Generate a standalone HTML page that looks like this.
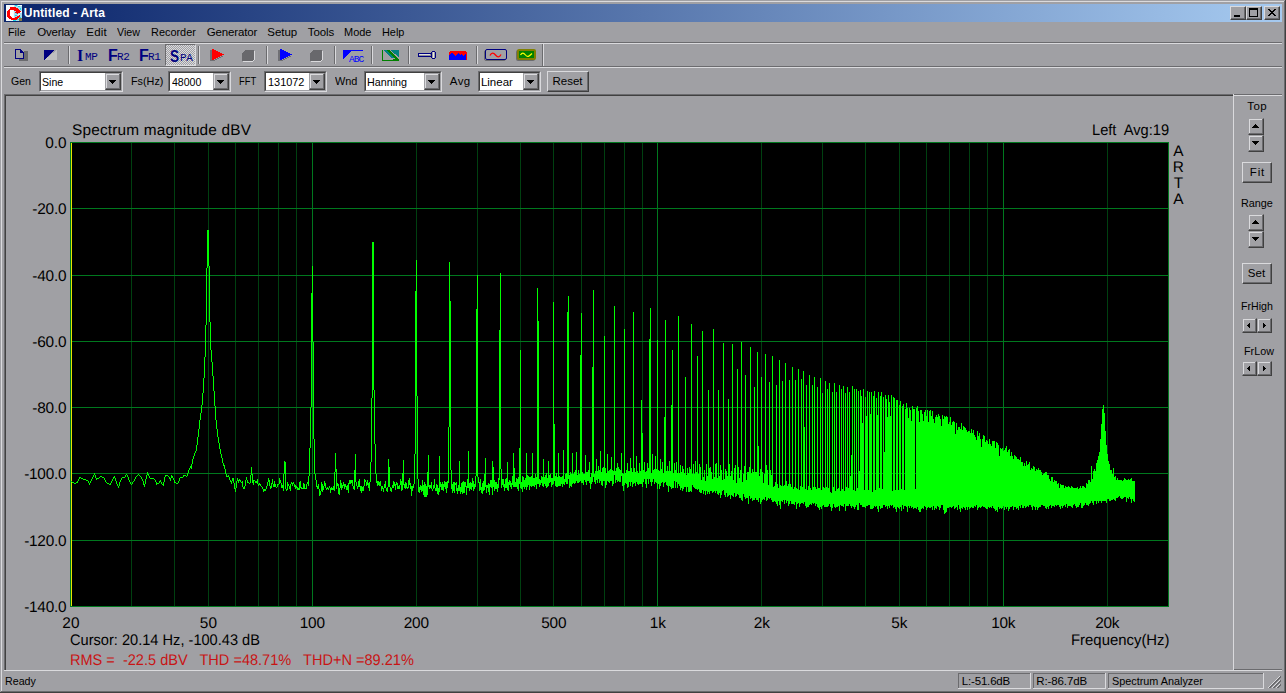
<!DOCTYPE html>
<html lang="en"><head><meta charset="utf-8"><title>Untitled - Arta</title>
<style>
html,body{margin:0;padding:0}
body{width:1286px;height:693px;overflow:hidden;background:#a0a0a4;position:relative;font-family:"Liberation Sans",sans-serif}
body>div,body>svg,body>span{position:absolute;display:block}
.title{background:linear-gradient(90deg,#0a246a 0%,#a6caf0 100%)}
.btn{box-sizing:border-box;background:#a0a0a4;border-top:1px solid #dadadd;border-left:1px solid #dadadd;border-right:1px solid #404040;border-bottom:1px solid #404040;box-shadow:inset -1px -1px 0 #6b6b6e}
.btn.sb{border-top-color:#a0a0a4;border-left-color:#a0a0a4;box-shadow:inset -1px -1px 0 #6b6b6e,inset 1px 1px 0 #dadadd}
.sunk{box-sizing:border-box;border-top:1px solid #6b6b6e;border-left:1px solid #6b6b6e;border-right:1px solid #dadadd;border-bottom:1px solid #dadadd}
.sunk .white{box-sizing:border-box;width:100%;height:100%;background:#fff;border-top:1px solid #404040;border-left:1px solid #404040;border-right:1px solid #a0a0a4;border-bottom:1px solid #a0a0a4}
.t{white-space:pre;line-height:1;}
.ui{font-family:"Liberation Sans",sans-serif}
.ar{font-family:"Liberation Sans",sans-serif;text-rendering:geometricPrecision}

.tb-big{font-weight:bold;font-size:16px;line-height:16px;color:#000080}
.tb-small{font-family:"Liberation Mono",monospace;font-size:11px;line-height:11px;color:#000080;letter-spacing:-0.4px}
.tb-abc{font-family:"Liberation Mono",monospace;font-weight:normal;font-size:9.5px;line-height:9.5px;color:#0000ff;letter-spacing:-0.9px}
.tb-pressed{box-sizing:border-box;border-top:1px solid #6b6b6e;border-left:1px solid #6b6b6e;border-right:1px solid #dadadd;border-bottom:1px solid #dadadd;
background-color:#a0a0a4;background-image:conic-gradient(#dadadd 25%,#a0a0a4 0 50%,#dadadd 0 75%,#a0a0a4 0);background-size:2px 2px}
</style></head>
<body>
<div style="left:1px;top:1px;width:1284px;height:1px;background:#dadadd;"></div>
<div style="left:1px;top:1px;width:1px;height:691px;background:#dadadd;"></div>
<div style="left:0px;top:692px;width:1286px;height:1px;background:#404040;"></div>
<div style="left:1285px;top:0px;width:1px;height:693px;background:#404040;"></div>
<div style="left:1px;top:691px;width:1284px;height:1px;background:#6b6b6e;"></div>
<div style="left:1284px;top:1px;width:1px;height:691px;background:#6b6b6e;"></div>
<div class="title" style="left:4px;top:4px;width:1278px;height:18px"></div>
<svg style="left:6px;top:5px" width="16" height="16" viewBox="0 0 16 16" shape-rendering="crispEdges">
<rect width="16" height="16" fill="#f4fafd"/>
<rect x="8" y="0" width="8" height="16" fill="#a8e0f0"/>
<path d="M9 0h2v1h-2zM12 1h2v1h-2zM14 3h1v2h-1zM10 8h2v1h-2zM9 10h2v1h-2zM13 12h2v1h-2zM11 14h2v1h-2zM7 15h3v1h-3z" fill="#18d8e8"/>
<path d="M12 0h4v1h-4zM14 6h2v2h-2zM12 9h2v1h-2z" fill="#f4fafd"/>
<rect x="13" y="13" width="3" height="3" fill="#807848"/>
<path d="M4 2h6v1h2v1h1v1h1v1h1v1h-1v1h-2v1h-1v-1h-2v-1h1v-1h-2v-1h-2v1h-1v6h1v1h3v-1h2v-1h2v-1h1v2h-1v1h-1v1h-1v1h-6v-1h-2v-1h-1v-1h-1v-6h1v-1h1v-1h1z" fill="#ff0000"/>
<rect x="4" y="5" width="3" height="6" fill="#ffffff"/>
</svg>
<span class="t ui" style="left:23.82px;top:6.84px;font-size:12px;letter-spacing:0.16px;color:#fff;font-weight:bold;">Untitled - Arta</span>
<div class="btn " style="left:1230px;top:6px;width:16px;height:14px"></div>
<div class="btn " style="left:1246px;top:6px;width:16px;height:14px"></div>
<div class="btn " style="left:1264px;top:6px;width:16px;height:14px"></div>
<div style="left:1234px;top:15px;width:6px;height:2px;background:#000;"></div>
<div style="left:1249px;top:8px;width:9px;height:9px;box-sizing:border-box;border:1px solid #000;border-top:2px solid #000"></div>
<svg style="left:1268px;top:9px" width="8" height="7" viewBox="0 0 8 7" shape-rendering="crispEdges"><path d="M0 0h2v1h1v1h2v-1h1v-1h2v1h-1v1h-1v1h-1v1h1v1h1v1h1v1h-2v-1h-1v-1h-2v1h-1v1h-2v-1h1v-1h1v-1h1v-1h-1v-1h-1v-1h-1z" fill="#000"/></svg>
<span class="t ui" style="left:8.30px;top:27.27px;font-size:11.5px;transform:scaleX(0.939);transform-origin:0 0;">File</span>
<span class="t ui" style="left:37.25px;top:27.27px;font-size:11.5px;letter-spacing:-0.19px;">Overlay</span>
<span class="t ui" style="left:86.25px;top:27.27px;font-size:11.5px;letter-spacing:0.22px;">Edit</span>
<span class="t ui" style="left:116.81px;top:27.27px;font-size:11.5px;transform:scaleX(0.926);transform-origin:0 0;">View</span>
<span class="t ui" style="left:150.79px;top:27.27px;font-size:11.5px;transform:scaleX(0.949);transform-origin:0 0;">Recorder</span>
<span class="t ui" style="left:206.75px;top:27.27px;font-size:11.5px;letter-spacing:-0.16px;">Generator</span>
<span class="t ui" style="left:267.25px;top:27.27px;font-size:11.5px;letter-spacing:-0.02px;">Setup</span>
<span class="t ui" style="left:307.75px;top:27.27px;font-size:11.5px;letter-spacing:-0.09px;">Tools</span>
<span class="t ui" style="left:344.29px;top:27.27px;font-size:11.5px;transform:scaleX(0.953);transform-origin:0 0;">Mode</span>
<span class="t ui" style="left:382.29px;top:27.27px;font-size:11.5px;transform:scaleX(0.948);transform-origin:0 0;">Help</span>
<div style="left:4px;top:42px;width:1278px;height:1px;background:#6b6b6e;"></div>
<div style="left:4px;top:43px;width:1278px;height:1px;background:#dadadd;"></div>
<div style="left:4px;top:66px;width:1278px;height:1px;background:#6b6b6e;"></div>
<div style="left:4px;top:67px;width:1278px;height:1px;background:#dadadd;"></div>
<svg style="left:15px;top:49px" width="13" height="12" viewBox="0 0 13 12" shape-rendering="crispEdges"><path d="M4 2h9v10h-9z" fill="#6b6b6e"/><path d="M0 0h6l3 3v7h-9z" fill="#a0a0a4"/><path d="M0 0h6v1h1v1h1v1h1v7h-9zM1 1v8h7v-5h-3v-3z" fill="#000080" fill-rule="evenodd"/></svg>
<svg style="left:44px;top:50px" width="13" height="10" viewBox="0 0 13 10" shape-rendering="crispEdges"><path d="M13 0v10h-13z" fill="#c0c0c0"/><path d="M0 0h11l-11 10z" fill="#000080"/></svg>
<div style="left:68px;top:46px;width:1px;height:18px;background:#6b6b6e"></div>
<div style="left:69px;top:46px;width:1px;height:18px;background:#dadadd"></div>
<span class="tb-big" style="left:77px;top:48px;font-family:'Liberation Serif',sans-serif">I</span>
<span class="tb-small" style="left:85px;top:52px">MP</span>
<span class="tb-big" style="left:108px;top:48px;font-family:'Liberation Sans',sans-serif">F</span>
<span class="tb-small" style="left:117px;top:52px">R2</span>
<span class="tb-big" style="left:139px;top:48px;font-family:'Liberation Sans',sans-serif">F</span>
<span class="tb-small" style="left:148px;top:52px">R1</span>
<div class="tb-pressed" style="left:165px;top:44px;width:31px;height:22px"></div>
<span class="tb-big" style="left:170px;top:49px;font-family:'Liberation Sans',sans-serif;transform:scaleX(0.85);transform-origin:0 0">S</span>
<span class="tb-small" style="left:180px;top:53px">PA</span>
<div style="left:198px;top:46px;width:1px;height:18px;background:#6b6b6e"></div>
<div style="left:199px;top:46px;width:1px;height:18px;background:#dadadd"></div>
<svg style="left:210px;top:49px" width="15" height="12" viewBox="0 0 15 12" shape-rendering="crispEdges"><path d="M0 1h2v11h-2z" fill="#707074"/><path d="M2 11h3v1h-3zM5 10h2v1h-2zM7 9h2v1h-2zM9 8h2v1h-2zM11 7h2v1h-2z" fill="#707074"/><path d="M2 0h2v1h2v1h2v1h2v1h2v1h2v1h-2v1h-2v1h-2v1h-2v1h-2v1h-2z" fill="#ff0000"/></svg>
<svg style="left:242px;top:50px" width="13" height="12" viewBox="0 0 13 12" shape-rendering="crispEdges"><path d="M3 0h9v9l-2 2h-10v-8z" fill="#68686c"/><path d="M12 1h1v9h-1zM11 10h1v1h-1zM1 11h10v1h-10z" fill="#dadadd"/></svg>
<div style="left:266px;top:46px;width:1px;height:18px;background:#6b6b6e"></div>
<div style="left:267px;top:46px;width:1px;height:18px;background:#dadadd"></div>
<svg style="left:278px;top:49px" width="15" height="12" viewBox="0 0 15 12" shape-rendering="crispEdges"><path d="M0 1h2v11h-2z" fill="#707074"/><path d="M2 11h3v1h-3zM5 10h2v1h-2zM7 9h2v1h-2zM9 8h2v1h-2zM11 7h2v1h-2z" fill="#707074"/><path d="M2 0h2v1h2v1h2v1h2v1h2v1h2v1h-2v1h-2v1h-2v1h-2v1h-2v1h-2z" fill="#0000ff"/></svg>
<svg style="left:310px;top:50px" width="13" height="12" viewBox="0 0 13 12" shape-rendering="crispEdges"><path d="M3 0h9v9l-2 2h-10v-8z" fill="#68686c"/><path d="M12 1h1v9h-1zM11 10h1v1h-1zM1 11h10v1h-10z" fill="#dadadd"/></svg>
<div style="left:334px;top:46px;width:1px;height:18px;background:#6b6b6e"></div>
<div style="left:335px;top:46px;width:1px;height:18px;background:#dadadd"></div>
<svg style="left:343px;top:50px" width="21" height="11" viewBox="0 0 21 11" shape-rendering="crispEdges"><path d="M0 0h20v1h-20z" fill="#0000ff"/><path d="M0 1h8l-8 8z" fill="#0000ff"/></svg>
<span class="tb-abc" style="left:349px;top:55px">ABC</span>
<div style="left:371px;top:46px;width:1px;height:18px;background:#6b6b6e"></div>
<div style="left:372px;top:46px;width:1px;height:18px;background:#dadadd"></div>
<svg style="left:382px;top:50px" width="18" height="11" viewBox="0 0 18 11" shape-rendering="crispEdges"><path d="M8 0h9v7z" fill="#008080"/><path d="M1 0h3l8 8h-3z" fill="#008080"/><path d="M5 0h2l10 9v2h-2z" fill="#008000"/><path d="M0 0h1v11h-1zM0 9h17v2h-17z" fill="#008000"/><path d="M1 9h10v1h-10z" fill="#a0a0a4"/></svg>
<div style="left:408px;top:46px;width:1px;height:18px;background:#6b6b6e"></div>
<div style="left:409px;top:46px;width:1px;height:18px;background:#dadadd"></div>
<svg style="left:418px;top:51px" width="19" height="9" viewBox="0 0 19 9" shape-rendering="crispEdges"><path d="M0 2h14v4h-14z" fill="#000080"/><path d="M1 3h12v2h-12z" fill="#909094"/><path d="M1 3h11v1h-11z" fill="#e0e0e0"/><path d="M14 0h3v1h1v6h-1v1h-3v-1h-1v-6h1z" fill="#000080"/><path d="M14 1h3v6h-3z" fill="#a0a0a4"/><path d="M15 1h1v6h-1z" fill="#e8e8e0"/></svg>
<svg style="left:449px;top:51px" width="18" height="9" viewBox="0 0 18 9" shape-rendering="crispEdges"><path d="M1 0h16v1h1v8h-18v-8h1z" fill="#ff0000"/><path d="M0 4h1v-1h1v-1h2v1h1v1h1v1h1v-1h1v-1h1v-1h1v1h1v1h1v-1h1v1h1v1h1v-1h1v-1h1v6h-18z" fill="#0000ff"/></svg>
<div style="left:476px;top:46px;width:1px;height:18px;background:#6b6b6e"></div>
<div style="left:477px;top:46px;width:1px;height:18px;background:#dadadd"></div>
<svg style="left:484px;top:49px" width="23" height="12" viewBox="0 0 23 12" shape-rendering="crispEdges"><rect x="0.5" y="1.5" width="21" height="10" rx="1.5" fill="none" stroke="#6b6b6e" shape-rendering="auto"/><rect x="1.5" y="0.5" width="21" height="10" rx="1.5" fill="#a0a0a4" stroke="#000080" shape-rendering="auto"/><path d="M6 6.5c1.5-3 3.5-3 5.5-0.5s4 2.500 5.500-0.500" fill="none" stroke="#ff0000" stroke-width="1.300" shape-rendering="auto"/></svg>
<svg style="left:516px;top:49px" width="20" height="12" viewBox="0 0 20 12" shape-rendering="crispEdges"><rect x="0" y="1" width="19" height="11" rx="2" fill="#6b6b6e" shape-rendering="auto"/><rect x="1" y="0" width="19" height="11" rx="2" fill="#808000" shape-rendering="auto"/><rect x="3" y="2" width="15" height="7" fill="#008000"/><path d="M4.500 6c1.500-2.500 3-2.500 5 0s3.500 1.500 6.500-1.500" fill="none" stroke="#ffff00" stroke-width="1.200" shape-rendering="auto"/></svg>
<div style="left:542px;top:44px;width:1px;height:22px;background:#6b6b6e"></div>
<div style="left:543px;top:44px;width:1px;height:22px;background:#dadadd"></div>
<span class="t ui" style="left:10.82px;top:76.27px;font-size:11.5px;transform:scaleX(0.913);transform-origin:0 0;">Gen</span>
<div class="sunk" style="left:39px;top:71px;width:84px;height:21px"><div class="white"></div></div>
<div class="btn sb" style="left:105px;top:73px;width:16px;height:17px"></div>
<svg style="left:109px;top:80px" width="7" height="4" viewBox="0 0 7 4" shape-rendering="crispEdges"><path d="M0 0h7v1h-1v1h-1v1h-1v1h-1v-1h-1v-1h-1v-1h-1z" fill="#000"/></svg>
<span class="t ui" style="left:41.71px;top:77.27px;font-size:11.5px;transform:scaleX(0.919);transform-origin:0 0;">Sine</span>
<span class="t ui" style="left:130.80px;top:76.27px;font-size:11.5px;transform:scaleX(0.939);transform-origin:0 0;">Fs(Hz)</span>
<div class="sunk" style="left:168px;top:71px;width:63px;height:21px"><div class="white"></div></div>
<div class="btn sb" style="left:213px;top:73px;width:16px;height:17px"></div>
<svg style="left:217px;top:80px" width="7" height="4" viewBox="0 0 7 4" shape-rendering="crispEdges"><path d="M0 0h7v1h-1v1h-1v1h-1v1h-1v-1h-1v-1h-1v-1h-1z" fill="#000"/></svg>
<span class="t ui" style="left:172.11px;top:77.27px;font-size:11.5px;transform:scaleX(0.918);transform-origin:0 0;">48000</span>
<span class="t ui" style="left:239.39px;top:76.27px;font-size:11.5px;transform:scaleX(0.817);transform-origin:0 0;">FFT</span>
<div class="sunk" style="left:264px;top:71px;width:63px;height:21px"><div class="white"></div></div>
<div class="btn sb" style="left:309px;top:73px;width:16px;height:17px"></div>
<svg style="left:313px;top:80px" width="7" height="4" viewBox="0 0 7 4" shape-rendering="crispEdges"><path d="M0 0h7v1h-1v1h-1v1h-1v1h-1v-1h-1v-1h-1v-1h-1z" fill="#000"/></svg>
<span class="t ui" style="left:268.29px;top:77.27px;font-size:11.5px;transform:scaleX(0.949);transform-origin:0 0;">131072</span>
<span class="t ui" style="left:335.29px;top:76.27px;font-size:11.5px;transform:scaleX(0.948);transform-origin:0 0;">Wnd</span>
<div class="sunk" style="left:364px;top:71px;width:78px;height:21px"><div class="white"></div></div>
<div class="btn sb" style="left:424px;top:73px;width:16px;height:17px"></div>
<svg style="left:428px;top:80px" width="7" height="4" viewBox="0 0 7 4" shape-rendering="crispEdges"><path d="M0 0h7v1h-1v1h-1v1h-1v1h-1v-1h-1v-1h-1v-1h-1z" fill="#000"/></svg>
<span class="t ui" style="left:366.80px;top:77.27px;font-size:11.5px;transform:scaleX(0.936);transform-origin:0 0;">Hanning</span>
<span class="t ui" style="left:449.75px;top:76.27px;font-size:11.5px;letter-spacing:0.44px;">Avg</span>
<div class="sunk" style="left:478px;top:71px;width:63px;height:21px"><div class="white"></div></div>
<div class="btn sb" style="left:523px;top:73px;width:16px;height:17px"></div>
<svg style="left:527px;top:80px" width="7" height="4" viewBox="0 0 7 4" shape-rendering="crispEdges"><path d="M0 0h7v1h-1v1h-1v1h-1v1h-1v-1h-1v-1h-1v-1h-1z" fill="#000"/></svg>
<span class="t ui" style="left:480.95px;top:77.27px;font-size:11.5px;letter-spacing:-0.01px;">Linear</span>
<div class="btn " style="left:547px;top:71px;width:42px;height:21px"></div>
<span class="t ui" style="left:552.45px;top:76.27px;font-size:11.5px;letter-spacing:0.01px;">Reset</span>
<div style="left:4px;top:94px;width:1229px;height:1px;background:#6b6b6e;"></div>
<div style="left:4px;top:94px;width:1px;height:576px;background:#6b6b6e;"></div>
<div style="left:5px;top:95px;width:1228px;height:1px;background:#404040;"></div>
<div style="left:5px;top:95px;width:1px;height:575px;background:#404040;"></div>
<div style="left:1233px;top:94px;width:1px;height:577px;background:#dadadd;"></div>
<div style="left:4px;top:670px;width:1278px;height:1px;background:#dadadd;"></div>
<div style="left:1234px;top:94px;width:48px;height:1px;background:#6b6b6e;"></div>
<div style="left:1234px;top:95px;width:48px;height:1px;background:#dadadd;"></div>
<div style="left:1234px;top:669px;width:48px;height:1px;background:#6b6b6e;"></div>
<svg style="left:0;top:0" width="1286" height="693" viewBox="0 0 1286 693" shape-rendering="crispEdges">
<rect x="70" y="142" width="1099" height="465" fill="#000"/>
<path fill="#004010" d="M131 142h1v464h-1zM174 142h1v464h-1zM208 142h1v464h-1zM235 142h1v464h-1zM258 142h1v464h-1zM278 142h1v464h-1zM296 142h1v464h-1zM416 142h1v464h-1zM477 142h1v464h-1zM520 142h1v464h-1zM553 142h1v464h-1zM581 142h1v464h-1zM604 142h1v464h-1zM624 142h1v464h-1zM642 142h1v464h-1zM761 142h1v464h-1zM822 142h1v464h-1zM865 142h1v464h-1zM899 142h1v464h-1zM926 142h1v464h-1zM949 142h1v464h-1zM969 142h1v464h-1zM987 142h1v464h-1zM1107 142h1v464h-1z"/>
<path fill="#00781e" d="M312 142h1v464h-1zM657 142h1v464h-1zM1003 142h1v464h-1zM70 142h1v464h-1zM1168 142h1v464h-1zM70 142h1099v1h-1099zM70 208h1099v1h-1099zM70 275h1099v1h-1099zM70 341h1099v1h-1099zM70 407h1099v1h-1099zM70 473h1099v1h-1099zM70 540h1099v1h-1099zM70 606h1099v1h-1099z"/>
<rect x="71" y="143" width="1" height="463" fill="#e6e600"/>
<path fill="#00ff00" d="M71 481h1v1h-1zM72 482h1v1h-1zM73 482h1v1h-1zM74 483h1v1h-1zM75 483h1v1h-1zM76 482h1v1h-1zM77 481h1v2h-1zM78 479h1v2h-1zM79 477h1v2h-1zM80 477h1v1h-1zM81 478h1v1h-1zM82 478h1v1h-1zM83 479h1v1h-1zM84 479h1v1h-1zM85 479h1v1h-1zM86 480h1v1h-1zM87 480h1v1h-1zM88 481h1v2h-1zM89 483h1v2h-1zM90 481h1v2h-1zM91 479h1v2h-1zM92 477h1v2h-1zM93 475h1v2h-1zM94 473h1v2h-1zM95 475h1v3h-1zM96 478h1v2h-1zM97 478h1v1h-1zM98 478h1v1h-1zM99 477h1v1h-1zM100 476h1v1h-1zM101 476h1v1h-1zM102 477h1v1h-1zM103 477h1v1h-1zM104 478h1v2h-1zM105 480h1v2h-1zM106 482h1v1h-1zM107 483h1v1h-1zM108 483h1v1h-1zM109 484h1v1h-1zM110 483h1v2h-1zM111 481h1v2h-1zM112 479h1v2h-1zM113 477h1v2h-1zM114 476h1v2h-1zM115 478h1v3h-1zM116 481h1v3h-1zM117 484h1v2h-1zM118 486h1v2h-1zM119 482h1v4h-1zM120 480h1v2h-1zM121 478h1v2h-1zM122 477h1v1h-1zM123 477h1v1h-1zM124 477h1v1h-1zM125 475h1v2h-1zM126 474h1v1h-1zM127 475h1v2h-1zM128 477h1v3h-1zM129 480h1v2h-1zM130 482h1v2h-1zM131 484h1v1h-1zM132 482h1v2h-1zM133 481h1v1h-1zM134 479h1v2h-1zM135 477h1v2h-1zM136 476h1v1h-1zM137 475h1v1h-1zM138 474h1v1h-1zM139 475h1v1h-1zM140 476h1v1h-1zM141 477h1v2h-1zM142 479h1v2h-1zM143 481h1v4h-1zM144 484h1v3h-1zM145 479h1v5h-1zM146 475h1v4h-1zM147 472h1v3h-1zM148 474h1v2h-1zM149 476h1v2h-1zM150 478h1v1h-1zM151 478h1v1h-1zM152 478h1v1h-1zM153 478h1v1h-1zM154 479h1v1h-1zM155 480h1v2h-1zM156 482h1v3h-1zM157 483h1v1h-1zM158 483h1v1h-1zM159 481h1v2h-1zM160 480h1v2h-1zM161 482h1v2h-1zM162 484h1v1h-1zM163 482h1v4h-1zM164 477h1v5h-1zM165 475h1v2h-1zM166 475h1v1h-1zM167 475h1v1h-1zM168 476h1v1h-1zM169 477h1v2h-1zM170 478h1v3h-1zM171 475h1v3h-1zM172 476h1v2h-1zM173 478h1v2h-1zM174 480h1v3h-1zM175 482h1v1h-1zM176 483h1v1h-1zM177 483h1v1h-1zM178 481h1v2h-1zM179 478h1v3h-1zM180 477h1v1h-1zM181 477h1v1h-1zM182 477h1v1h-1zM183 475h1v2h-1zM184 475h1v1h-1zM185 475h1v1h-1zM186 476h1v1h-1zM187 473h1v3h-1zM188 470h1v3h-1zM189 468h1v2h-1zM190 466h1v2h-1zM191 464h1v5h-1zM192 459h1v5h-1zM193 456h1v3h-1zM194 453h1v3h-1zM195 451h1v2h-1zM196 445h1v6h-1zM197 437h1v8h-1zM198 429h1v8h-1zM199 420h1v9h-1zM200 413h1v7h-1zM201 405h1v8h-1zM202 393h1v12h-1zM203 378h1v15h-1zM204 357h1v21h-1zM205 325h1v32h-1zM206 268h1v57h-1zM207 230h1v38h-1zM208 230h1v36h-1zM209 266h1v56h-1zM210 322h1v28h-1zM211 350h1v12h-1zM212 362h1v14h-1zM213 376h1v15h-1zM214 391h1v15h-1zM215 406h1v14h-1zM216 420h1v9h-1zM217 429h1v8h-1zM218 437h1v6h-1zM219 443h1v6h-1zM220 449h1v5h-1zM221 454h1v4h-1zM222 458h1v5h-1zM223 463h1v3h-1zM224 465h1v4h-1zM225 469h1v5h-1zM226 474h1v3h-1zM227 476h1v1h-1zM228 475h1v2h-1zM229 477h1v3h-1zM230 480h1v2h-1zM231 481h1v3h-1zM232 478h1v3h-1zM233 478h1v5h-1zM234 483h1v6h-1zM235 488h1v4h-1zM236 481h1v7h-1zM237 478h1v3h-1zM238 480h1v3h-1zM239 479h1v2h-1zM240 480h1v2h-1zM241 482h1v1h-1zM242 481h1v6h-1zM243 487h1v2h-1zM244 486h1v3h-1zM245 480h1v6h-1zM246 477h1v3h-1zM247 480h1v3h-1zM248 482h1v1h-1zM249 483h1v1h-1zM250 475h1v8h-1zM251 467h1v8h-1zM252 474h1v9h-1zM253 480h1v5h-1zM254 480h1v1h-1zM255 481h1v2h-1zM256 481h1v2h-1zM257 479h1v5h-1zM258 484h1v2h-1zM259 483h1v2h-1zM260 484h1v2h-1zM261 486h1v1h-1zM262 487h1v2h-1zM263 489h1v3h-1zM264 489h1v2h-1zM265 489h1v2h-1zM266 486h1v3h-1zM267 482h1v4h-1zM268 478h1v4h-1zM269 480h1v6h-1zM270 486h1v3h-1zM271 483h1v5h-1zM272 479h1v5h-1zM273 484h1v3h-1zM274 481h1v6h-1zM275 484h1v3h-1zM276 487h1v1h-1zM277 484h1v3h-1zM278 484h1v1h-1zM279 478h1v6h-1zM280 480h1v3h-1zM281 483h1v5h-1zM282 485h1v3h-1zM283 474h1v17h-1zM284 461h1v13h-1zM285 462h1v27h-1zM286 489h1v2h-1zM287 482h1v8h-1zM288 484h1v2h-1zM289 486h1v3h-1zM290 484h1v7h-1zM291 482h1v2h-1zM292 483h1v3h-1zM293 482h1v2h-1zM294 484h1v3h-1zM295 485h1v4h-1zM296 486h1v2h-1zM297 487h1v3h-1zM298 488h1v2h-1zM299 482h1v8h-1zM300 481h1v7h-1zM301 487h1v2h-1zM302 488h1v1h-1zM303 483h1v6h-1zM304 484h1v5h-1zM305 488h1v1h-1zM306 484h1v5h-1zM307 482h1v2h-1zM308 476h1v10h-1zM309 448h1v28h-1zM310 407h1v41h-1zM311 293h1v114h-1zM312 266h1v76h-1zM313 342h1v97h-1zM314 439h1v35h-1zM315 474h1v6h-1zM316 480h1v7h-1zM317 486h1v3h-1zM318 484h1v5h-1zM319 489h1v7h-1zM320 491h1v4h-1zM321 482h1v9h-1zM322 484h1v8h-1zM323 486h1v4h-1zM324 481h1v5h-1zM325 483h1v5h-1zM326 488h1v2h-1zM327 487h1v2h-1zM328 488h1v2h-1zM329 486h1v2h-1zM330 488h1v5h-1zM331 487h1v3h-1zM332 488h1v2h-1zM333 486h1v4h-1zM334 472h1v19h-1zM335 453h1v19h-1zM336 469h1v20h-1zM337 483h1v3h-1zM338 484h1v10h-1zM339 488h1v7h-1zM340 480h1v8h-1zM341 483h1v7h-1zM342 485h1v3h-1zM343 482h1v4h-1zM344 484h1v5h-1zM345 484h1v3h-1zM346 486h1v4h-1zM347 485h1v5h-1zM348 483h1v10h-1zM349 480h1v4h-1zM350 480h1v4h-1zM351 480h1v3h-1zM352 480h1v6h-1zM353 486h1v3h-1zM354 470h1v20h-1zM355 454h1v28h-1zM356 482h1v4h-1zM357 486h1v3h-1zM358 481h1v6h-1zM359 479h1v8h-1zM360 486h1v5h-1zM361 486h1v7h-1zM362 487h1v4h-1zM363 486h1v5h-1zM364 479h1v7h-1zM365 480h1v2h-1zM366 482h1v4h-1zM367 480h1v5h-1zM368 483h1v5h-1zM369 482h1v9h-1zM370 462h1v20h-1zM371 398h1v64h-1zM372 242h1v156h-1zM373 242h1v148h-1zM374 390h1v54h-1zM375 444h1v30h-1zM376 474h1v9h-1zM377 481h1v5h-1zM378 481h1v4h-1zM379 482h1v4h-1zM380 481h1v5h-1zM381 486h1v5h-1zM382 486h1v3h-1zM383 488h1v4h-1zM384 484h1v4h-1zM385 481h1v7h-1zM386 488h1v3h-1zM387 487h1v5h-1zM388 459h1v28h-1zM389 467h1v20h-1zM390 487h1v4h-1zM391 488h1v4h-1zM392 485h1v3h-1zM393 481h1v7h-1zM394 482h1v4h-1zM395 484h1v6h-1zM396 482h1v3h-1zM397 483h1v6h-1zM398 486h1v3h-1zM399 485h1v4h-1zM400 479h1v6h-1zM401 481h1v10h-1zM402 473h1v17h-1zM403 460h1v25h-1zM404 484h1v4h-1zM405 482h1v7h-1zM406 483h1v5h-1zM407 487h1v2h-1zM408 480h1v8h-1zM409 478h1v7h-1zM410 483h1v6h-1zM411 486h1v10h-1zM412 486h1v5h-1zM413 484h1v4h-1zM414 454h1v30h-1zM415 291h1v163h-1zM416 260h1v136h-1zM417 396h1v83h-1zM418 479h1v13h-1zM419 487h1v6h-1zM420 485h1v5h-1zM421 486h1v6h-1zM422 480h1v11h-1zM423 485h1v10h-1zM424 482h1v15h-1zM425 484h1v13h-1zM426 486h1v11h-1zM427 472h1v23h-1zM428 455h1v32h-1zM429 485h1v4h-1zM430 485h1v3h-1zM431 482h1v7h-1zM432 489h1v2h-1zM433 485h1v4h-1zM434 479h1v9h-1zM435 488h1v3h-1zM436 484h1v7h-1zM437 485h1v9h-1zM438 488h1v7h-1zM439 456h1v36h-1zM440 482h1v5h-1zM441 484h1v6h-1zM442 482h1v8h-1zM443 484h1v7h-1zM444 481h1v6h-1zM445 482h1v7h-1zM446 482h1v11h-1zM447 481h1v7h-1zM448 427h1v56h-1zM449 262h1v165h-1zM450 301h1v169h-1zM451 470h1v19h-1zM452 484h1v9h-1zM453 482h1v9h-1zM454 482h1v11h-1zM455 483h1v2h-1zM456 482h1v9h-1zM457 488h1v6h-1zM458 485h1v6h-1zM459 461h1v30h-1zM460 487h1v7h-1zM461 483h1v9h-1zM462 482h1v12h-1zM463 481h1v12h-1zM464 482h1v11h-1zM465 482h1v5h-1zM466 486h1v9h-1zM467 479h1v9h-1zM468 451h1v37h-1zM469 483h1v8h-1zM470 482h1v7h-1zM471 483h1v7h-1zM472 478h1v9h-1zM473 481h1v10h-1zM474 484h1v5h-1zM475 476h1v11h-1zM476 309h1v167h-1zM477 275h1v202h-1zM478 477h1v6h-1zM479 482h1v9h-1zM480 479h1v11h-1zM481 487h1v6h-1zM482 483h1v11h-1zM483 481h1v10h-1zM484 474h1v16h-1zM485 458h1v29h-1zM486 485h1v8h-1zM487 485h1v3h-1zM488 483h1v9h-1zM489 484h1v11h-1zM490 480h1v7h-1zM491 480h1v8h-1zM492 461h1v34h-1zM493 467h1v20h-1zM494 480h1v11h-1zM495 482h1v7h-1zM496 482h1v7h-1zM497 484h1v8h-1zM498 478h1v10h-1zM499 330h1v150h-1zM500 273h1v196h-1zM501 469h1v19h-1zM502 479h1v6h-1zM503 479h1v8h-1zM504 484h1v7h-1zM505 479h1v9h-1zM506 478h1v10h-1zM507 462h1v28h-1zM508 482h1v9h-1zM509 480h1v5h-1zM510 481h1v6h-1zM511 483h1v6h-1zM512 476h1v9h-1zM513 453h1v34h-1zM514 468h1v19h-1zM515 482h1v5h-1zM516 478h1v9h-1zM517 479h1v10h-1zM518 477h1v14h-1zM519 448h1v36h-1zM520 350h1v138h-1zM521 482h1v7h-1zM522 476h1v16h-1zM523 477h1v10h-1zM524 480h1v9h-1zM525 478h1v9h-1zM526 453h1v37h-1zM527 475h1v12h-1zM528 476h1v9h-1zM529 477h1v13h-1zM530 477h1v9h-1zM531 476h1v11h-1zM532 453h1v33h-1zM533 478h1v8h-1zM534 478h1v9h-1zM535 474h1v11h-1zM536 477h1v12h-1zM537 288h1v196h-1zM538 321h1v163h-1zM539 479h1v8h-1zM540 480h1v5h-1zM541 476h1v7h-1zM542 477h1v9h-1zM543 459h1v28h-1zM544 477h1v7h-1zM545 475h1v11h-1zM546 473h1v15h-1zM547 478h1v9h-1zM548 461h1v25h-1zM549 475h1v8h-1zM550 474h1v8h-1zM551 478h1v9h-1zM552 478h1v7h-1zM553 302h1v182h-1zM554 424h1v57h-1zM555 476h1v10h-1zM556 473h1v14h-1zM557 477h1v10h-1zM558 453h1v33h-1zM559 476h1v10h-1zM560 477h1v9h-1zM561 477h1v7h-1zM562 476h1v11h-1zM563 450h1v34h-1zM564 479h1v6h-1zM565 474h1v8h-1zM566 473h1v11h-1zM567 312h1v172h-1zM568 296h1v183h-1zM569 475h1v13h-1zM570 472h1v14h-1zM571 474h1v13h-1zM572 453h1v31h-1zM573 474h1v9h-1zM574 472h1v12h-1zM575 470h1v13h-1zM576 452h1v29h-1zM577 475h1v8h-1zM578 470h1v13h-1zM579 474h1v8h-1zM580 355h1v126h-1zM581 313h1v170h-1zM582 472h1v11h-1zM583 474h1v11h-1zM584 474h1v6h-1zM585 455h1v27h-1zM586 472h1v13h-1zM587 472h1v9h-1zM588 470h1v11h-1zM589 462h1v21h-1zM590 477h1v12h-1zM591 473h1v11h-1zM592 367h1v115h-1zM593 290h1v187h-1zM594 474h1v8h-1zM595 471h1v13h-1zM596 459h1v21h-1zM597 471h1v12h-1zM598 466h1v13h-1zM599 470h1v13h-1zM600 451h1v30h-1zM601 472h1v13h-1zM602 468h1v18h-1zM603 467h1v14h-1zM604 336h1v145h-1zM605 468h1v20h-1zM606 473h1v12h-1zM607 454h1v27h-1zM608 471h1v11h-1zM609 470h1v13h-1zM610 469h1v12h-1zM611 457h1v24h-1zM612 470h1v16h-1zM613 471h1v13h-1zM614 306h1v169h-1zM615 471h1v12h-1zM616 468h1v12h-1zM617 463h1v19h-1zM618 467h1v14h-1zM619 469h1v13h-1zM620 470h1v12h-1zM621 453h1v23h-1zM622 473h1v13h-1zM623 474h1v17h-1zM624 329h1v156h-1zM625 473h1v10h-1zM626 470h1v14h-1zM627 463h1v25h-1zM628 471h1v16h-1zM629 471h1v11h-1zM630 458h1v28h-1zM631 468h1v14h-1zM632 472h1v15h-1zM633 312h1v172h-1zM634 468h1v15h-1zM635 472h1v14h-1zM636 456h1v26h-1zM637 471h1v13h-1zM638 473h1v12h-1zM639 463h1v21h-1zM640 471h1v13h-1zM641 400h1v84h-1zM642 433h1v54h-1zM643 470h1v12h-1zM644 462h1v17h-1zM645 472h1v12h-1zM646 471h1v17h-1zM647 463h1v16h-1zM648 468h1v16h-1zM649 339h1v140h-1zM650 308h1v174h-1zM651 473h1v13h-1zM652 454h1v28h-1zM653 470h1v9h-1zM654 469h1v15h-1zM655 456h1v26h-1zM656 469h1v14h-1zM657 340h1v149h-1zM658 470h1v14h-1zM659 471h1v18h-1zM660 459h1v27h-1zM661 469h1v14h-1zM662 462h1v20h-1zM663 473h1v14h-1zM664 417h1v66h-1zM665 320h1v162h-1zM666 471h1v14h-1zM667 466h1v20h-1zM668 471h1v21h-1zM669 461h1v25h-1zM670 471h1v16h-1zM671 405h1v84h-1zM672 350h1v138h-1zM673 473h1v15h-1zM674 463h1v18h-1zM675 470h1v18h-1zM676 462h1v20h-1zM677 473h1v15h-1zM678 316h1v168h-1zM679 473h1v13h-1zM680 465h1v25h-1zM681 472h1v16h-1zM682 466h1v25h-1zM683 469h1v20h-1zM684 473h1v14h-1zM685 377h1v110h-1zM686 475h1v17h-1zM687 468h1v19h-1zM688 473h1v19h-1zM689 467h1v25h-1zM690 469h1v22h-1zM691 324h1v168h-1zM692 474h1v11h-1zM693 464h1v23h-1zM694 474h1v14h-1zM695 461h1v28h-1zM696 472h1v17h-1zM697 356h1v134h-1zM698 474h1v15h-1zM699 464h1v28h-1zM700 467h1v26h-1zM701 480h1v13h-1zM702 331h1v159h-1zM703 477h1v17h-1zM704 470h1v21h-1zM705 481h1v14h-1zM706 464h1v27h-1zM707 476h1v18h-1zM708 390h1v102h-1zM709 468h1v26h-1zM710 467h1v24h-1zM711 472h1v19h-1zM712 479h1v14h-1zM713 329h1v163h-1zM714 477h1v14h-1zM715 464h1v29h-1zM716 463h1v28h-1zM717 478h1v16h-1zM718 390h1v105h-1zM719 476h1v17h-1zM720 465h1v33h-1zM721 470h1v25h-1zM722 480h1v11h-1zM723 343h1v147h-1zM724 479h1v16h-1zM725 469h1v28h-1zM726 471h1v22h-1zM727 476h1v21h-1zM728 399h1v97h-1zM729 464h1v31h-1zM730 476h1v23h-1zM731 471h1v24h-1zM732 344h1v152h-1zM733 480h1v17h-1zM734 468h1v25h-1zM735 465h1v32h-1zM736 483h1v13h-1zM737 369h1v125h-1zM738 467h1v28h-1zM739 478h1v20h-1zM740 470h1v28h-1zM741 342h1v158h-1zM742 482h1v19h-1zM743 474h1v20h-1zM744 466h1v31h-1zM745 375h1v124h-1zM746 480h1v18h-1zM747 472h1v26h-1zM748 472h1v32h-1zM749 467h1v29h-1zM750 347h1v152h-1zM751 473h1v25h-1zM752 469h1v32h-1zM753 472h1v28h-1zM754 387h1v113h-1zM755 472h1v26h-1zM756 472h1v28h-1zM757 352h1v148h-1zM758 446h1v56h-1zM759 476h1v22h-1zM760 469h1v35h-1zM761 377h1v125h-1zM762 472h1v28h-1zM763 483h1v16h-1zM764 474h1v26h-1zM765 354h1v143h-1zM766 465h1v36h-1zM767 470h1v30h-1zM768 485h1v13h-1zM769 382h1v117h-1zM770 470h1v28h-1zM771 475h1v25h-1zM772 356h1v146h-1zM773 487h1v15h-1zM774 486h1v15h-1zM775 482h1v20h-1zM776 385h1v119h-1zM777 484h1v22h-1zM778 488h1v13h-1zM779 360h1v145h-1zM780 485h1v24h-1zM781 486h1v15h-1zM782 381h1v121h-1zM783 486h1v14h-1zM784 485h1v19h-1zM785 363h1v137h-1zM786 481h1v22h-1zM787 486h1v15h-1zM788 484h1v22h-1zM789 380h1v124h-1zM790 484h1v17h-1zM791 487h1v17h-1zM792 367h1v137h-1zM793 489h1v15h-1zM794 487h1v18h-1zM795 380h1v122h-1zM796 488h1v21h-1zM797 489h1v15h-1zM798 369h1v134h-1zM799 490h1v17h-1zM800 486h1v18h-1zM801 379h1v124h-1zM802 487h1v16h-1zM803 371h1v133h-1zM804 427h1v75h-1zM805 489h1v17h-1zM806 385h1v123h-1zM807 490h1v17h-1zM808 486h1v21h-1zM809 375h1v130h-1zM810 488h1v16h-1zM811 490h1v15h-1zM812 385h1v118h-1zM813 487h1v17h-1zM814 377h1v126h-1zM815 487h1v19h-1zM816 489h1v15h-1zM817 387h1v120h-1zM818 488h1v20h-1zM819 488h1v22h-1zM820 378h1v129h-1zM821 490h1v19h-1zM822 393h1v113h-1zM823 487h1v18h-1zM824 488h1v19h-1zM825 381h1v126h-1zM826 487h1v20h-1zM827 389h1v118h-1zM828 488h1v18h-1zM829 383h1v121h-1zM830 492h1v15h-1zM831 493h1v18h-1zM832 392h1v116h-1zM833 487h1v17h-1zM834 383h1v124h-1zM835 491h1v17h-1zM836 392h1v115h-1zM837 489h1v18h-1zM838 488h1v18h-1zM839 385h1v126h-1zM840 491h1v14h-1zM841 389h1v117h-1zM842 489h1v17h-1zM843 386h1v121h-1zM844 491h1v13h-1zM845 393h1v118h-1zM846 487h1v19h-1zM847 387h1v119h-1zM848 488h1v18h-1zM849 392h1v112h-1zM850 476h1v30h-1zM851 455h1v53h-1zM852 386h1v120h-1zM853 490h1v17h-1zM854 389h1v120h-1zM855 491h1v16h-1zM856 389h1v116h-1zM857 488h1v22h-1zM858 391h1v119h-1zM859 471h1v32h-1zM860 390h1v115h-1zM861 396h1v109h-1zM862 423h1v84h-1zM863 389h1v118h-1zM864 490h1v17h-1zM865 397h1v111h-1zM866 416h1v90h-1zM867 391h1v115h-1zM868 490h1v15h-1zM869 392h1v113h-1zM870 414h1v95h-1zM871 392h1v117h-1zM872 492h1v17h-1zM873 396h1v112h-1zM874 391h1v115h-1zM875 490h1v17h-1zM876 398h1v108h-1zM877 415h1v94h-1zM878 392h1v120h-1zM879 488h1v18h-1zM880 396h1v113h-1zM881 392h1v116h-1zM882 489h1v19h-1zM883 397h1v108h-1zM884 452h1v53h-1zM885 395h1v112h-1zM886 399h1v107h-1zM887 417h1v92h-1zM888 395h1v111h-1zM889 402h1v106h-1zM890 416h1v89h-1zM891 395h1v111h-1zM892 491h1v14h-1zM893 397h1v111h-1zM894 398h1v109h-1zM895 490h1v19h-1zM896 400h1v112h-1zM897 400h1v107h-1zM898 490h1v18h-1zM899 405h1v104h-1zM900 401h1v106h-1zM901 489h1v22h-1zM902 406h1v99h-1zM903 404h1v105h-1zM904 490h1v16h-1zM905 409h1v97h-1zM906 403h1v104h-1zM907 408h1v104h-1zM908 418h1v88h-1zM909 408h1v100h-1zM910 410h1v96h-1zM911 421h1v87h-1zM912 406h1v101h-1zM913 409h1v100h-1zM914 409h1v99h-1zM915 489h1v19h-1zM916 408h1v101h-1zM917 406h1v101h-1zM918 411h1v99h-1zM919 422h1v90h-1zM920 410h1v102h-1zM921 410h1v99h-1zM922 414h1v94h-1zM923 421h1v88h-1zM924 412h1v94h-1zM925 410h1v97h-1zM926 416h1v94h-1zM927 410h1v98h-1zM928 422h1v85h-1zM929 411h1v97h-1zM930 410h1v98h-1zM931 416h1v91h-1zM932 411h1v99h-1zM933 419h1v87h-1zM934 423h1v87h-1zM935 417h1v91h-1zM936 415h1v94h-1zM937 417h1v89h-1zM938 414h1v93h-1zM939 416h1v94h-1zM940 419h1v89h-1zM941 426h1v79h-1zM942 415h1v90h-1zM943 419h1v91h-1zM944 416h1v98h-1zM945 417h1v96h-1zM946 416h1v96h-1zM947 417h1v91h-1zM948 424h1v84h-1zM949 422h1v85h-1zM950 417h1v90h-1zM951 425h1v83h-1zM952 422h1v85h-1zM953 421h1v85h-1zM954 422h1v87h-1zM955 434h1v74h-1zM956 423h1v84h-1zM957 430h1v80h-1zM958 427h1v78h-1zM959 427h1v82h-1zM960 429h1v83h-1zM961 423h1v85h-1zM962 430h1v79h-1zM963 426h1v81h-1zM964 427h1v81h-1zM965 428h1v82h-1zM966 430h1v77h-1zM967 432h1v78h-1zM968 431h1v76h-1zM969 431h1v78h-1zM970 433h1v75h-1zM971 429h1v78h-1zM972 433h1v75h-1zM973 430h1v78h-1zM974 435h1v71h-1zM975 437h1v70h-1zM976 440h1v65h-1zM977 431h1v79h-1zM978 436h1v72h-1zM979 433h1v74h-1zM980 439h1v69h-1zM981 447h1v60h-1zM982 439h1v67h-1zM983 435h1v72h-1zM984 436h1v71h-1zM985 442h1v66h-1zM986 440h1v69h-1zM987 441h1v68h-1zM988 444h1v63h-1zM989 439h1v69h-1zM990 444h1v63h-1zM991 446h1v62h-1zM992 441h1v65h-1zM993 441h1v67h-1zM994 441h1v68h-1zM995 448h1v63h-1zM996 442h1v68h-1zM997 443h1v69h-1zM998 445h1v62h-1zM999 456h1v53h-1zM1000 448h1v60h-1zM1001 449h1v60h-1zM1002 448h1v60h-1zM1003 451h1v55h-1zM1004 450h1v60h-1zM1005 448h1v59h-1zM1006 446h1v63h-1zM1007 452h1v55h-1zM1008 450h1v61h-1zM1009 449h1v60h-1zM1010 456h1v51h-1zM1011 452h1v55h-1zM1012 456h1v50h-1zM1013 459h1v51h-1zM1014 455h1v52h-1zM1015 456h1v51h-1zM1016 457h1v52h-1zM1017 459h1v49h-1zM1018 459h1v51h-1zM1019 460h1v46h-1zM1020 457h1v51h-1zM1021 462h1v43h-1zM1022 462h1v46h-1zM1023 466h1v42h-1zM1024 463h1v43h-1zM1025 466h1v42h-1zM1026 461h1v46h-1zM1027 465h1v41h-1zM1028 464h1v43h-1zM1029 462h1v43h-1zM1030 470h1v35h-1zM1031 468h1v39h-1zM1032 469h1v41h-1zM1033 466h1v40h-1zM1034 467h1v40h-1zM1035 471h1v39h-1zM1036 469h1v38h-1zM1037 470h1v40h-1zM1038 468h1v40h-1zM1039 470h1v37h-1zM1040 470h1v37h-1zM1041 472h1v33h-1zM1042 475h1v30h-1zM1043 474h1v32h-1zM1044 473h1v33h-1zM1045 472h1v36h-1zM1046 472h1v37h-1zM1047 475h1v32h-1zM1048 475h1v34h-1zM1049 479h1v27h-1zM1050 481h1v24h-1zM1051 477h1v31h-1zM1052 477h1v29h-1zM1053 482h1v24h-1zM1054 480h1v27h-1zM1055 481h1v24h-1zM1056 481h1v25h-1zM1057 484h1v21h-1zM1058 483h1v22h-1zM1059 488h1v19h-1zM1060 484h1v25h-1zM1061 485h1v21h-1zM1062 485h1v23h-1zM1063 485h1v21h-1zM1064 488h1v17h-1zM1065 486h1v21h-1zM1066 487h1v17h-1zM1067 487h1v21h-1zM1068 486h1v20h-1zM1069 487h1v19h-1zM1070 488h1v18h-1zM1071 486h1v21h-1zM1072 487h1v21h-1zM1073 488h1v17h-1zM1074 488h1v16h-1zM1075 488h1v18h-1zM1076 488h1v20h-1zM1077 487h1v20h-1zM1078 489h1v18h-1zM1079 488h1v17h-1zM1080 486h1v17h-1zM1081 488h1v20h-1zM1082 486h1v22h-1zM1083 486h1v20h-1zM1084 487h1v18h-1zM1085 488h1v15h-1zM1086 483h1v22h-1zM1087 484h1v21h-1zM1088 480h1v26h-1zM1089 480h1v24h-1zM1090 482h1v21h-1zM1091 466h1v35h-1zM1092 479h1v24h-1zM1093 471h1v34h-1zM1094 469h1v32h-1zM1095 471h1v30h-1zM1096 463h1v41h-1zM1097 460h1v41h-1zM1098 456h1v47h-1zM1099 452h1v49h-1zM1100 439h1v62h-1zM1101 424h1v79h-1zM1102 409h1v92h-1zM1103 405h1v96h-1zM1104 413h1v88h-1zM1105 431h1v70h-1zM1106 445h1v58h-1zM1107 454h1v45h-1zM1108 461h1v38h-1zM1109 464h1v37h-1zM1110 470h1v31h-1zM1111 470h1v30h-1zM1112 474h1v26h-1zM1113 468h1v31h-1zM1114 477h1v23h-1zM1115 476h1v25h-1zM1116 480h1v18h-1zM1117 478h1v20h-1zM1118 480h1v17h-1zM1119 480h1v16h-1zM1120 480h1v18h-1zM1121 480h1v19h-1zM1122 481h1v18h-1zM1123 480h1v18h-1zM1124 478h1v19h-1zM1125 479h1v18h-1zM1126 480h1v22h-1zM1127 480h1v18h-1zM1128 479h1v20h-1zM1129 480h1v17h-1zM1130 479h1v20h-1zM1131 478h1v25h-1zM1132 481h1v18h-1zM1133 481h1v20h-1zM1134 481h1v21h-1z"/>
</svg>
<span class="t ar" style="left:72.00px;top:123.46px;font-size:15.4px;letter-spacing:0.17px;">Spectrum magnitude dBV</span>
<span class="t ar" style="left:1091.65px;top:123.46px;font-size:15.4px;transform:scaleX(0.952);transform-origin:0 0;">Left  Avg:19</span>
<span class="t ar" style="left:45.20px;top:135.96px;font-size:15.4px;">0.0</span>
<span class="t ar" style="left:32.20px;top:201.96px;font-size:15.4px;letter-spacing:-0.17px;">-20.0</span>
<span class="t ar" style="left:32.20px;top:268.96px;font-size:15.4px;letter-spacing:-0.17px;">-40.0</span>
<span class="t ar" style="left:32.20px;top:334.96px;font-size:15.4px;letter-spacing:-0.17px;">-60.0</span>
<span class="t ar" style="left:32.20px;top:400.96px;font-size:15.4px;letter-spacing:-0.17px;">-80.0</span>
<span class="t ar" style="left:24.20px;top:466.96px;font-size:15.4px;letter-spacing:-0.25px;">-100.0</span>
<span class="t ar" style="left:24.20px;top:533.96px;font-size:15.4px;letter-spacing:-0.25px;">-120.0</span>
<span class="t ar" style="left:24.20px;top:599.96px;font-size:15.4px;letter-spacing:-0.25px;">-140.0</span>
<span class="t ar" style="left:62.15px;top:615.96px;font-size:15.4px;letter-spacing:0.28px;">20</span>
<span class="t ar" style="left:199.64px;top:615.96px;font-size:15.4px;letter-spacing:0.28px;">50</span>
<span class="t ar" style="left:299.64px;top:615.96px;font-size:15.4px;letter-spacing:-0.14px;">100</span>
<span class="t ar" style="left:403.65px;top:615.96px;font-size:15.4px;letter-spacing:-0.14px;">200</span>
<span class="t ar" style="left:541.14px;top:615.96px;font-size:15.4px;letter-spacing:-0.14px;">500</span>
<span class="t ar" style="left:649.64px;top:615.96px;font-size:15.4px;letter-spacing:0.14px;">1k</span>
<span class="t ar" style="left:753.65px;top:615.96px;font-size:15.4px;letter-spacing:0.14px;">2k</span>
<span class="t ar" style="left:891.14px;top:615.96px;font-size:15.4px;letter-spacing:0.14px;">5k</span>
<span class="t ar" style="left:991.14px;top:615.96px;font-size:15.4px;letter-spacing:-0.21px;">10k</span>
<span class="t ar" style="left:1095.15px;top:615.96px;font-size:15.4px;letter-spacing:-0.21px;">20k</span>
<span class="t ar" style="left:1070.73px;top:632.96px;font-size:15.4px;transform:scaleX(0.968);transform-origin:0 0;">Frequency(Hz)</span>
<span class="t ar" style="left:70.05px;top:632.96px;font-size:15.4px;transform:scaleX(0.949);transform-origin:0 0;">Cursor: 20.14 Hz, -100.43 dB</span>
<span class="t ar" style="left:70.05px;top:652.96px;font-size:15.4px;color:#c81414;transform:scaleX(0.945);transform-origin:0 0;">RMS =  -22.5 dBV   THD =48.71%   THD+N =89.21%</span>
<span class="t ar" style="left:1173.27px;top:144.46px;font-size:15.4px;">A</span>
<span class="t ar" style="left:1172.84px;top:160.46px;font-size:15.4px;">R</span>
<span class="t ar" style="left:1173.70px;top:176.46px;font-size:15.4px;">T</span>
<span class="t ar" style="left:1173.27px;top:192.46px;font-size:15.4px;">A</span>
<span class="t ui" style="left:1247.25px;top:101.27px;font-size:11.5px;letter-spacing:0.47px;">Top</span>
<div class="btn sb" style="left:1248px;top:118px;width:16px;height:17px"></div>
<div class="btn sb" style="left:1248px;top:135px;width:16px;height:17px"></div>
<svg style="left:1252px;top:124px" width="7" height="4" viewBox="0 0 7 4" shape-rendering="crispEdges"><path d="M3 0h1v1h1v1h1v1h1v1h-7v-1h1v-1h1v-1h1z" fill="#000"/></svg>
<svg style="left:1252px;top:141px" width="7" height="4" viewBox="0 0 7 4" shape-rendering="crispEdges"><path d="M0 0h7v1h-1v1h-1v1h-1v1h-1v-1h-1v-1h-1v-1h-1z" fill="#000"/></svg>
<div class="btn " style="left:1242px;top:162px;width:30px;height:21px"></div>
<span class="t ui" style="left:1249.75px;top:167.27px;font-size:11.5px;letter-spacing:0.86px;">Fit</span>
<span class="t ui" style="left:1240.80px;top:198.27px;font-size:11.5px;transform:scaleX(0.941);transform-origin:0 0;">Range</span>
<div class="btn sb" style="left:1248px;top:214px;width:16px;height:17px"></div>
<div class="btn sb" style="left:1248px;top:231px;width:16px;height:17px"></div>
<svg style="left:1252px;top:220px" width="7" height="4" viewBox="0 0 7 4" shape-rendering="crispEdges"><path d="M3 0h1v1h1v1h1v1h1v1h-7v-1h1v-1h1v-1h1z" fill="#000"/></svg>
<svg style="left:1252px;top:237px" width="7" height="4" viewBox="0 0 7 4" shape-rendering="crispEdges"><path d="M0 0h7v1h-1v1h-1v1h-1v1h-1v-1h-1v-1h-1v-1h-1z" fill="#000"/></svg>
<div class="btn " style="left:1242px;top:263px;width:30px;height:21px"></div>
<span class="t ui" style="left:1247.75px;top:268.27px;font-size:11.5px;letter-spacing:0.11px;">Set</span>
<span class="t ui" style="left:1241.01px;top:301.27px;font-size:11.5px;transform:scaleX(0.924);transform-origin:0 0;">FrHigh</span>
<div class="btn sb" style="left:1242px;top:318px;width:15px;height:15px"></div>
<div class="btn sb" style="left:1257px;top:318px;width:15px;height:15px"></div>
<svg style="left:1247px;top:323px" width="3" height="5" viewBox="0 0 3 5" shape-rendering="crispEdges"><path d="M2 0h1v5h-1v-1h-1v-1h-1v-1h1v-1h1z" fill="#000"/></svg>
<svg style="left:1263px;top:323px" width="3" height="5" viewBox="0 0 3 5" shape-rendering="crispEdges"><path d="M0 0h1v1h1v1h1v1h-1v1h-1v1h-1z" fill="#000"/></svg>
<span class="t ui" style="left:1244.00px;top:346.27px;font-size:11.5px;transform:scaleX(0.936);transform-origin:0 0;">FrLow</span>
<div class="btn sb" style="left:1242px;top:361px;width:15px;height:15px"></div>
<div class="btn sb" style="left:1257px;top:361px;width:15px;height:15px"></div>
<svg style="left:1247px;top:366px" width="3" height="5" viewBox="0 0 3 5" shape-rendering="crispEdges"><path d="M2 0h1v5h-1v-1h-1v-1h-1v-1h1v-1h1z" fill="#000"/></svg>
<svg style="left:1263px;top:366px" width="3" height="5" viewBox="0 0 3 5" shape-rendering="crispEdges"><path d="M0 0h1v1h1v1h1v1h-1v1h-1v1h-1z" fill="#000"/></svg>
<span class="t ui" style="left:5.31px;top:676.27px;font-size:11.5px;transform:scaleX(0.929);transform-origin:0 0;">Ready</span>
<div style="left:958px;top:673px;width:72px;height:1px;background:#6b6b6e;"></div>
<div style="left:958px;top:673px;width:1px;height:15px;background:#6b6b6e;"></div>
<div style="left:958px;top:688px;width:73px;height:1px;background:#dadadd;"></div>
<div style="left:1030px;top:673px;width:1px;height:16px;background:#dadadd;"></div>
<div style="left:1033px;top:673px;width:72px;height:1px;background:#6b6b6e;"></div>
<div style="left:1033px;top:673px;width:1px;height:15px;background:#6b6b6e;"></div>
<div style="left:1033px;top:688px;width:73px;height:1px;background:#dadadd;"></div>
<div style="left:1105px;top:673px;width:1px;height:16px;background:#dadadd;"></div>
<div style="left:1108px;top:673px;width:155px;height:1px;background:#6b6b6e;"></div>
<div style="left:1108px;top:673px;width:1px;height:15px;background:#6b6b6e;"></div>
<div style="left:1108px;top:688px;width:156px;height:1px;background:#dadadd;"></div>
<div style="left:1263px;top:673px;width:1px;height:16px;background:#dadadd;"></div>
<span class="t ui" style="left:961.75px;top:676.27px;font-size:11.5px;letter-spacing:-0.17px;">L:-51.6dB</span>
<span class="t ui" style="left:1036.25px;top:676.27px;font-size:11.5px;letter-spacing:-0.1px;">R:-86.7dB</span>
<span class="t ui" style="left:1111.80px;top:676.27px;font-size:11.5px;transform:scaleX(0.942);transform-origin:0 0;">Spectrum Analyzer</span>
<svg style="left:1268px;top:676px" width="13" height="13" viewBox="0 0 13 13" shape-rendering="crispEdges">
<g fill="#dadadd"><path d="M11 0h1v1h-1zM10 1h1v1h-1zM9 2h1v1h-1zM8 3h1v1h-1zM7 4h1v1h-1zM6 5h1v1h-1zM5 6h1v1h-1zM4 7h1v1h-1zM3 8h1v1h-1zM2 9h1v1h-1zM1 10h1v1h-1zM0 11h1v1h-1z"/>
<path d="M11 4h1v1h-1zM10 5h1v1h-1zM9 6h1v1h-1zM8 7h1v1h-1zM7 8h1v1h-1zM6 9h1v1h-1zM5 10h1v1h-1zM4 11h1v1h-1z"/>
<path d="M11 8h1v1h-1zM10 9h1v1h-1zM9 10h1v1h-1zM8 11h1v1h-1z"/></g>
<g fill="#6b6b6e"><path d="M12 0h1v2h-1zM11 1h1v2h-1zM10 2h1v2h-1zM9 3h1v2h-1zM8 4h1v2h-1zM7 5h1v2h-1zM6 6h1v2h-1zM5 7h1v2h-1zM4 8h1v2h-1zM3 9h1v2h-1zM2 10h1v2h-1zM1 11h1v1h-1z"/>
<path d="M12 4h1v2h-1zM11 5h1v2h-1zM10 6h1v2h-1zM9 7h1v2h-1zM8 8h1v2h-1zM7 9h1v2h-1zM6 10h1v2h-1zM5 11h1v1h-1z"/>
<path d="M12 8h1v2h-1zM11 9h1v2h-1zM10 10h1v2h-1zM9 11h1v1h-1z"/></g></svg>
</body></html>
